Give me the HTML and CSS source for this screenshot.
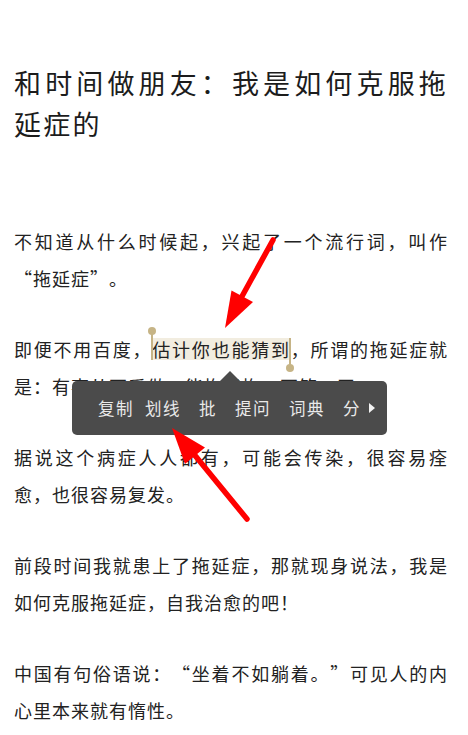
FILE: index.html
```html
<!DOCTYPE html>
<html lang="zh-CN">
<head>
<meta charset="utf-8">
<title>和时间做朋友</title>
<link rel="stylesheet" href="styles.css">
</head>
<body>
<div class="page">
  <article class="article">
    <h1 class="title">和时间做朋友：我是如何克服拖延症的</h1>
    <div class="body">
      <p>不知道从什么时候起，兴起了一个流行词，叫作“拖延症”。</p>
      <p>即便不用百度，<span class="hl">估计你也能猜到<span class="handle handle-start"></span><span class="handle handle-end"></span></span>，所谓的拖延症就是：有事从不爱做，能拖就拖，不管一天。</p>
      <p>据说这个病症人人都有，可能会传染，很容易痊愈，也很容易复发。</p>
      <p>前段时间我就患上了拖延症，那就现身说法，我是如何克服拖延症，自我治愈的吧！</p>
      <p>中国有句俗语说：“坐着不如躺着。”可见人的内心里本来就有惰性。</p>
    </div>
  </article>

  <div class="toolbar">
    <span class="tool tool-first">复制</span>
    <span class="tool">划线</span>
    <span class="tool">批</span>
    <span class="tool">提问</span>
    <span class="tool">词典</span>
    <span class="tool tool-last">分</span>
    <span class="more"></span>
  </div>

  <svg class="arrows" width="468" height="735" viewBox="0 0 468 735" xmlns="http://www.w3.org/2000/svg">
    <line x1="273" y1="240" x2="240" y2="300" stroke="#ff0000" stroke-width="5.5" stroke-linecap="round"/>
    <polygon points="225,328 231.5,290.5 253,302" fill="#ff0000"/>
    <line x1="247" y1="519" x2="193" y2="453" stroke="#ff0000" stroke-width="5.5" stroke-linecap="round"/>
    <polygon points="172,428 205,447.5 185,464" fill="#ff0000"/>
  </svg>
</div>
</body>
</html>
```
FILE: styles.css
```css
html, body {
  margin: 0;
  padding: 0;
  background: #ffffff;
}

.page {
  position: relative;
  width: 468px;
  min-height: 735px;
  overflow: hidden;
  font-family: "Noto Sans CJK SC", "Noto Sans", sans-serif;
  color: #222222;
}

.article {
  padding: 63px 20px 0 14px;
  text-spacing-trim: space-all;
}

.title {
  margin: 0;
  font-size: 27px;
  font-weight: 400;
  line-height: 40.5px;
  letter-spacing: 2.2px;
  text-align: justify;
  color: #1c1c1c;
}

.body {
  margin-top: 79px;
}

.body p {
  margin: 0 0 35px;
  font-size: 18px;
  line-height: 36.5px;
  letter-spacing: 1px;
  text-align: justify;
}

.hl {
  position: relative;
  background: linear-gradient(#f2ede0, #f2ede0) 0 50% / 100% 22px no-repeat;
}

.handle {
  position: absolute;
  width: 8px;
  top: 50%;
}

.handle::before,
.handle::after {
  content: "";
  position: absolute;
  background: #c6b486;
}

.handle::before {
  width: 8px;
  height: 8px;
  border-radius: 50%;
  left: 0;
}

.handle::after {
  width: 2px;
  left: 3px;
}

.handle-start {
  left: -4px;
  margin-top: -22px;
  height: 33px;
}

.handle-start::before { top: 0; }
.handle-start::after { top: 4px; height: 29px; }

.handle-end {
  right: -3px;
  margin-top: -11px;
  height: 34px;
}

.handle-end::before { bottom: 0; }
.handle-end::after { top: 0; height: 29px; }

.toolbar {
  position: absolute;
  left: 72px;
  top: 381px;
  width: 315px;
  height: 54px;
  box-sizing: border-box;
  padding-left: 26px;
  display: flex;
  align-items: center;
  background: #4b4b4b;
  border-radius: 5px;
  font-size: 16.5px;
  letter-spacing: 1.5px;
  color: #e9e9e9;
}

.toolbar::before {
  content: "";
  position: absolute;
  left: 148px;
  top: -10px;
  border-left: 10px solid transparent;
  border-right: 10px solid transparent;
  border-bottom: 10px solid #4b4b4b;
}

.tool {
  margin-right: 18px;
  white-space: nowrap;
}

.tool-first {
  margin-right: 11px;
}

.tool-last {
  margin-right: 8px;
}

.more {
  width: 0;
  height: 0;
  border-top: 5px solid transparent;
  border-bottom: 5px solid transparent;
  border-left: 6px solid #f2f2f2;
}

.arrows {
  position: absolute;
  left: 0;
  top: 0;
  pointer-events: none;
}
```
